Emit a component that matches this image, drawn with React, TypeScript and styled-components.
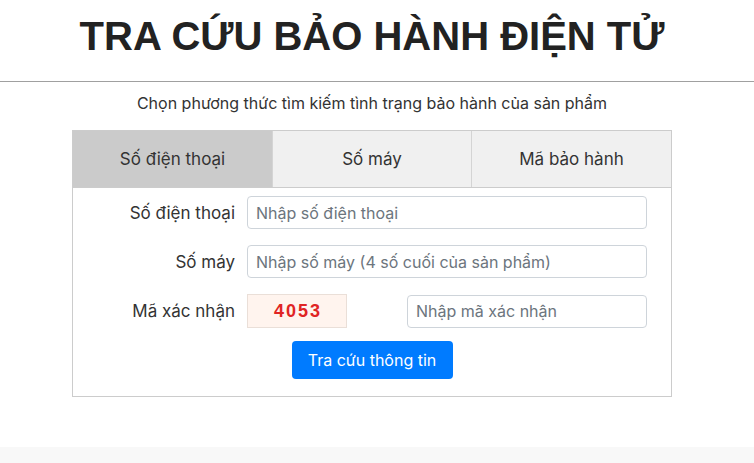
import React, { FC, useState } from 'react';
import styled, { createGlobalStyle } from 'styled-components';

const GlobalStyle = createGlobalStyle`
  html, body {
    margin: 0;
    padding: 0;
    background: #fff;
    font-family: Inter, Roboto, 'Noto Sans', sans-serif;
    color: #212529;
  }
  * {
    box-sizing: border-box;
  }
`;

const Page = styled.div`
  min-height: 463px;
  display: flex;
  flex-direction: column;
`;

const Header = styled.div`
  border-bottom: 1px solid #a0a0a0;
  height: 82px;
  padding-right: 10px;
  display: flex;
  justify-content: center;
  align-items: flex-start;
`;

const Title = styled.h1`
  margin: 11px 0 0;
  font-family: 'Liberation Sans', Arial, sans-serif;
  font-weight: 700;
  font-size: 40px;
  line-height: 50px;
  color: #222;
`;

const Main = styled.div`
  flex: 1;
  padding-right: 10px;
  display: flex;
  flex-direction: column;
  align-items: center;
`;

const Subtitle = styled.p`
  margin: 11px 0 0;
  font-size: 16px;
  line-height: 20px;
  color: #333;
`;

const Panel = styled.div`
  margin-top: 17px;
  width: 600px;
  border: 1px solid #ccc;
`;

const Tabs = styled.div`
  display: grid;
  grid-template-columns: 199px 199px 1fr;
  border-bottom: 1px solid #ccc;
`;

const Tab = styled.div<{ active?: boolean }>`
  height: 56px;
  display: flex;
  align-items: center;
  justify-content: center;
  font-size: 17px;
  color: #333;
  background: ${props => (props.active ? '#cbcbcb' : '#f0f0f0')};
  border-left: ${props => (props.active ? 'none' : '1px solid #d4d4d4')};
  cursor: pointer;
`;

const Form = styled.div`
  padding: 8px 24px 17px 0;
  display: flex;
  flex-direction: column;
  gap: 16px;
`;

const Row = styled.div`
  display: grid;
  grid-template-columns: 162px 1fr;
  column-gap: 12px;
  align-items: center;
`;

const Label = styled.label`
  text-align: right;
  font-size: 17px;
  color: #333;
`;

const Input = styled.input`
  width: 100%;
  height: 33px;
  padding: 0 8px;
  border: 1px solid #ced4da;
  border-radius: 4px;
  font-family: Inter, Roboto, 'Noto Sans', sans-serif;
  font-size: 16px;
  color: #495057;
  outline: none;
  &::placeholder {
    color: #6c757d;
  }
`;

const CaptchaRow = styled.div`
  display: grid;
  grid-template-columns: 100px 1fr;
  column-gap: 60px;
  align-items: center;
`;

const Captcha = styled.div`
  height: 34px;
  display: flex;
  align-items: center;
  justify-content: center;
  padding-left: 2px;
  background: #fff4ee;
  border: 1px solid #eadfd8;
  font-family: 'Liberation Sans', Arial, sans-serif;
  font-weight: 700;
  font-size: 18px;
  letter-spacing: 2px;
  color: #e02424;
`;

const Actions = styled.div`
  display: flex;
  justify-content: center;
  margin-top: -3px;
  padding-left: 24px;
`;

const SubmitButton = styled.button`
  width: 161px;
  height: 38px;
  border: 0;
  border-radius: 4px;
  background: #007bff;
  color: #fff;
  font-family: Inter, Roboto, 'Noto Sans', sans-serif;
  font-size: 16px;
  cursor: pointer;
`;

const Footer = styled.div`
  height: 16px;
  background: #f8f8f8;
`;

const tabs = ['Số điện thoại', 'Số máy', 'Mã bảo hành'];

const App: FC = () => {
  const [activeTab, setActiveTab] = useState(0);

  return (
    <Page>
      <GlobalStyle />
      <Header>
        <Title>TRA CỨU BẢO HÀNH ĐIỆN TỬ</Title>
      </Header>
      <Main>
        <Subtitle>Chọn phương thức tìm kiếm tình trạng bảo hành của sản phẩm</Subtitle>
        <Panel>
          <Tabs>
            {tabs.map((t, i) => (
              <Tab key={t} active={i === activeTab} onClick={() => setActiveTab(i)}>
                {t}
              </Tab>
            ))}
          </Tabs>
          <Form>
            <Row>
              <Label>Số điện thoại</Label>
              <Input placeholder="Nhập số điện thoại" />
            </Row>
            <Row>
              <Label>Số máy</Label>
              <Input placeholder="Nhập số máy (4 số cuối của sản phẩm)" />
            </Row>
            <Row>
              <Label>Mã xác nhận</Label>
              <CaptchaRow>
                <Captcha>4053</Captcha>
                <Input placeholder="Nhập mã xác nhận" />
              </CaptchaRow>
            </Row>
            <Actions>
              <SubmitButton>Tra cứu thông tin</SubmitButton>
            </Actions>
          </Form>
        </Panel>
      </Main>
      <Footer />
    </Page>
  );
};

export default App;
